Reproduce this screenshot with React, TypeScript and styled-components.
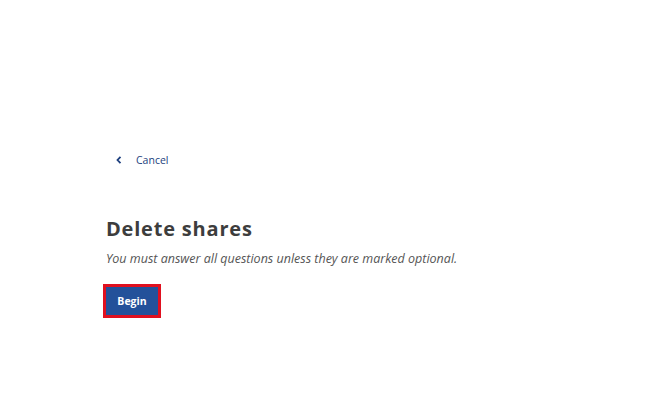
import React from "react";
import styled, { createGlobalStyle } from "styled-components";

const Global = createGlobalStyle`
  html, body { margin: 0; padding: 0; background: #ffffff; }
  body { font-family: "Open Sans", "Noto Sans", sans-serif; color: #333333; }
`;

const Page = styled.main`
  width: 650px;
  height: 408px;
  box-sizing: border-box;
  padding: 150px 0 0 106px;
  display: flex;
  flex-direction: column;
  align-items: flex-start;
`;

const BackLink = styled.a`
  display: flex;
  align-items: center;
  gap: 14px;
  margin-left: 10px;
  height: 20px;
  font-size: 10.5px;
  color: #1d3f7e;
  text-decoration: none;
  cursor: pointer;
`;

const Heading = styled.h1`
  margin: 46px 0 0 0;
  font-size: 20px;
  line-height: 26px;
  font-weight: 700;
  letter-spacing: 0.8px;
  color: #3d3d3d;
`;

const Hint = styled.p`
  margin: 8px 0 0 0;
  font-size: 12.5px;
  line-height: 18px;
  font-style: italic;
  color: #555555;
`;

const ButtonFocus = styled.div`
  margin: 16px 0 0 -3px;
  border: 3px solid #e0101f;
  display: inline-flex;
`;

const Button = styled.button`
  background: #23519a;
  color: #ffffff;
  border: none;
  height: 28px;
  width: 52px;
  font-family: inherit;
  font-size: 10.5px;
  font-weight: 700;
  padding: 0;
  cursor: pointer;
`;

export default function App() {
  return (
    <>
      <Global />
      <Page>
        <BackLink>
          <svg width="6" height="8" viewBox="0 0 6 8">
            <path d="M4.5 0.8 L1.5 4 L4.5 7.2" fill="none" stroke="#1d3f7e" strokeWidth="1.8" />
          </svg>
          Cancel
        </BackLink>
        <Heading>Delete shares</Heading>
        <Hint>You must answer all questions unless they are marked optional.</Hint>
        <ButtonFocus>
          <Button>Begin</Button>
        </ButtonFocus>
      </Page>
    </>
  );
}
